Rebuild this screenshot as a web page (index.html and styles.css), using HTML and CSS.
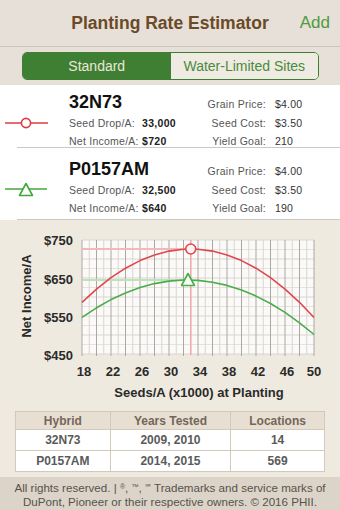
FILE: index.html
```html
<!DOCTYPE html>
<html>
<head>
<meta charset="utf-8">
<link rel="stylesheet" href="styles.css">
</head>
<body>
<header class="nav">
  <span></span>
  <h1 class="title">Planting Rate Estimator</h1>
  <span class="add">Add</span>
</header>
<div class="tabs">
  <div class="seg">
    <span class="seg-on">Standard</span>
    <span class="seg-off">Water-Limited Sites</span>
  </div>
</div>
<ul class="hybrids">
  <li class="row row-first">
    <div class="name">32N73</div>
    <div class="rlabel r1">Grain Price:</div><div class="rval r1">$4.00</div>
    <svg class="icon r2" width="48" height="14" viewBox="0 0 48 14"><line x1="5" y1="7" x2="48" y2="7" stroke="#dc3c43" stroke-width="1.6"/><circle cx="26" cy="7" r="4.6" fill="#fff" stroke="#dc3c43" stroke-width="1.6"/></svg>
    <div class="llabel r2">Seed Drop/A:</div><div class="lval r2">33,000</div>
    <div class="rlabel r2">Seed Cost:</div><div class="rval r2">$3.50</div>
    <div class="llabel r3">Net Income/A:</div><div class="lval r3">$720</div>
    <div class="rlabel r3">Yield Goal:</div><div class="rval r3">210</div>
  </li>
  <li class="row row-second">
    <div class="name">P0157AM</div>
    <div class="rlabel r1">Grain Price:</div><div class="rval r1">$4.00</div>
    <svg class="icon r2" width="48" height="16" viewBox="0 0 48 16"><line x1="5" y1="7" x2="47" y2="7" stroke="#43a63b" stroke-width="1.6"/><polygon points="26,1.5 19.5,13.5 32.5,13.5" fill="#fff" stroke="#43a63b" stroke-width="1.6" stroke-linejoin="round"/></svg>
    <div class="llabel r2">Seed Drop/A:</div><div class="lval r2">32,500</div>
    <div class="rlabel r2">Seed Cost:</div><div class="rval r2">$3.50</div>
    <div class="llabel r3">Net Income/A:</div><div class="lval r3">$640</div>
    <div class="rlabel r3">Yield Goal:</div><div class="rval r3">190</div>
  </li>
</ul>
<section class="results">
  <svg class="chart" width="340" height="182" viewBox="0 221 340 182">
    <rect x="82" y="241" width="232" height="114" fill="#fbfaf8"/>
    <g stroke="#e6e3de" stroke-width="1">
      <line x1="82" y1="250.5" x2="314" y2="250.5"/>
      <line x1="82" y1="269.5" x2="314" y2="269.5"/>
      <line x1="82" y1="288.5" x2="314" y2="288.5"/>
      <line x1="82" y1="307.5" x2="314" y2="307.5"/>
      <line x1="82" y1="326.5" x2="314" y2="326.5"/>
      <line x1="82" y1="345.5" x2="314" y2="345.5"/>
    </g>
    <g stroke="#d8d5d0" stroke-width="1">
      <line x1="82" y1="241" x2="314" y2="241"/>
      <line x1="82" y1="260" x2="314" y2="260"/>
      <line x1="82" y1="279" x2="314" y2="279"/>
      <line x1="82" y1="298" x2="314" y2="298"/>
      <line x1="82" y1="317" x2="314" y2="317"/>
      <line x1="82" y1="336" x2="314" y2="336"/>
      <line x1="82" y1="355" x2="314" y2="355"/>
    </g>
    <g stroke="#d9d6d1" stroke-width="1">
      <line x1="89.25" y1="241" x2="89.25" y2="356"/>
      <line x1="103.75" y1="241" x2="103.75" y2="356"/>
      <line x1="118.25" y1="241" x2="118.25" y2="356"/>
      <line x1="132.75" y1="241" x2="132.75" y2="356"/>
      <line x1="147.25" y1="241" x2="147.25" y2="356"/>
      <line x1="161.75" y1="241" x2="161.75" y2="356"/>
      <line x1="176.25" y1="241" x2="176.25" y2="356"/>
      <line x1="190.75" y1="241" x2="190.75" y2="356"/>
      <line x1="205.25" y1="241" x2="205.25" y2="356"/>
      <line x1="219.75" y1="241" x2="219.75" y2="356"/>
      <line x1="234.25" y1="241" x2="234.25" y2="356"/>
      <line x1="248.75" y1="241" x2="248.75" y2="356"/>
      <line x1="263.25" y1="241" x2="263.25" y2="356"/>
      <line x1="277.75" y1="241" x2="277.75" y2="356"/>
      <line x1="292.25" y1="241" x2="292.25" y2="356"/>
      <line x1="306.75" y1="241" x2="306.75" y2="356"/>
    </g>
    <g stroke="#aaa8a4" stroke-width="1">
      <line x1="82" y1="241" x2="82" y2="357"/>
      <line x1="96.5" y1="241" x2="96.5" y2="357"/>
      <line x1="111" y1="241" x2="111" y2="357"/>
      <line x1="125.5" y1="241" x2="125.5" y2="357"/>
      <line x1="140" y1="241" x2="140" y2="357"/>
      <line x1="154.5" y1="241" x2="154.5" y2="357"/>
      <line x1="169" y1="241" x2="169" y2="357"/>
      <line x1="183.5" y1="241" x2="183.5" y2="357"/>
      <line x1="198" y1="241" x2="198" y2="357"/>
      <line x1="212.5" y1="241" x2="212.5" y2="357"/>
      <line x1="227" y1="241" x2="227" y2="357"/>
      <line x1="241.5" y1="241" x2="241.5" y2="357"/>
      <line x1="256" y1="241" x2="256" y2="357"/>
      <line x1="270.5" y1="241" x2="270.5" y2="357"/>
      <line x1="285" y1="241" x2="285" y2="357"/>
      <line x1="299.5" y1="241" x2="299.5" y2="357"/>
      <line x1="314" y1="241" x2="314" y2="357"/>
    </g>
    <line x1="82" y1="250" x2="190.75" y2="250" stroke="#f3b9b9" stroke-width="2"/>
    <line x1="82" y1="281" x2="188" y2="281" stroke="#bfe2ba" stroke-width="2"/>
    <line x1="190.75" y1="241" x2="190.75" y2="356" stroke="#f0a9a9" stroke-width="1.5"/>
    <polyline fill="none" stroke="#e2464c" stroke-width="1.6" stroke-linejoin="round" points="82,303.3 96.5,290.1 111,278.7 125.5,269.2 140,261.6 154.5,255.9 169,252.1 183.5,250.2 190.75,250 198,250.2 212.5,252.1 227,255.9 241.5,261.6 256,269.2 270.5,278.7 285,290.1 299.5,303.3 314,318.5"/>
    <polyline fill="none" stroke="#4aad47" stroke-width="1.6" stroke-linejoin="round" points="82,318.4 96.5,308.8 111,300.6 125.5,293.9 140,288.5 154.5,284.6 169,282.1 183.5,281 187.1,281 198,281.4 212.5,283.2 227,286.4 241.5,291 256,297.1 270.5,304.5 285,313.4 299.5,323.8 314,335.5"/>
    <circle cx="190.75" cy="250" r="5" fill="#fdf3f2" stroke="#e2464c" stroke-width="1.6"/>
    <polygon points="188,274.5 181.5,286.5 194.5,286.5" fill="#f6fbf4" stroke="#4aad47" stroke-width="1.6" stroke-linejoin="round"/>
    <g class="ylab" text-anchor="end">
      <text x="73" y="246">$750</text>
      <text x="73" y="284.5">$650</text>
      <text x="73" y="322.5">$550</text>
      <text x="73" y="360.5">$450</text>
    </g>
    <g class="xlab" text-anchor="middle">
      <text x="84" y="377">18</text>
      <text x="113" y="377">22</text>
      <text x="142" y="377">26</text>
      <text x="171" y="377">30</text>
      <text x="200" y="377">34</text>
      <text x="229" y="377">38</text>
      <text x="258" y="377">42</text>
      <text x="287" y="377">46</text>
      <text x="314" y="377">50</text>
    </g>
    <text class="axtitle" x="199" y="398" text-anchor="middle">Seeds/A (x1000) at Planting</text>
    <text class="axtitle" x="0" y="0" text-anchor="middle" transform="translate(31 297) rotate(-90)">Net Income/A</text>
  </svg>
  <table class="trials">
    <thead>
      <tr><th class="c1">Hybrid</th><th class="c2">Years Tested</th><th class="c3">Locations</th></tr>
    </thead>
    <tbody>
      <tr><td>32N73</td><td>2009, 2010</td><td>14</td></tr>
      <tr><td>P0157AM</td><td>2014, 2015</td><td>569</td></tr>
    </tbody>
  </table>
</section>
<footer class="legal">
  <p>All rights reserved. | <span class="mark">®</span>, <span class="mark">™</span>, <span class="mark">℠</span> Trademarks and service marks of</p>
  <p>DuPont, Pioneer or their respective owners. © 2016 PHII.</p>
</footer>
</body>
</html>
```
FILE: styles.css
```css
* { box-sizing: border-box; }
html, body { margin: 0; padding: 0; }
body {
  width: 340px;
  height: 510px;
  overflow: hidden;
  font-family: "Liberation Sans", Arial, sans-serif;
  background: #efeadf;
  color: #222;
}
.nav {
  display: grid;
  grid-template-columns: 1fr auto 1fr;
  align-items: center;
  height: 47px;
  background: #e6e0d8;
  border-bottom: 1px solid #cdc5ba;
}
.title {
  margin: 0;
  font-size: 17.5px;
  font-weight: bold;
  color: #6b4a28;
}
.add {
  justify-self: end;
  padding-right: 10px;
  font-size: 17px;
  color: #4f9a3f;
}
.tabs {
  background: #e6e0d8;
  padding: 5px 21px 5px 22px;
}
.seg {
  display: grid;
  grid-template-columns: 1fr 1fr;
  height: 28px;
  border: 1px solid #3e7f33;
  border-radius: 5px;
  overflow: hidden;
  font-size: 14px;
}
.seg span {
  display: flex;
  align-items: center;
  justify-content: center;
}
.seg-on { background: #3e7f33; color: #ebe6da; }
.seg-off { background: #efeae2; color: #4b8a3c; }

.hybrids {
  list-style: none;
  margin: 0;
  padding: 0;
  background: #fff;
}
.row {
  position: relative;
  display: grid;
  grid-template-columns: 69px 73px 57px 67px 1fr;
  grid-template-rows: 23px 18px 18px;
  font-size: 10.5px;
  line-height: 18px;
}
.row::after {
  content: "";
  position: absolute;
  left: 17px;
  right: 0;
  bottom: 0;
  border-bottom: 1px solid #c9c9c9;
}
.row-first { height: 63px; padding-top: 6px; }
.row-second { height: 72px; padding-top: 10px; }
.name {
  grid-column: 2 / 4;
  grid-row: 1;
  font-size: 18px;
  font-weight: bold;
  line-height: 22px;
  color: #111;
}
.r1 { grid-row: 1; align-self: end; margin-bottom: 1px; }
.r2 { grid-row: 2; }
.r3 { grid-row: 3; }
.icon { grid-column: 1; align-self: center; }
.llabel { grid-column: 2; color: #555; letter-spacing: 0.25px; }
.lval { grid-column: 3; font-weight: bold; color: #222; letter-spacing: 0.3px; }
.rlabel { grid-column: 4; text-align: right; color: #555; letter-spacing: 0.25px; }
.rval { grid-column: 5; padding-left: 9px; color: #333; letter-spacing: 0.2px; }

.results {
  background: #efeadf;
  padding-bottom: 5px;
}
.chart { display: block; }
.ylab text, .xlab text {
  font-family: "Liberation Sans", Arial, sans-serif;
  font-size: 13px;
  font-weight: bold;
  fill: #2a2a2a;
}
.axtitle {
  font-family: "Liberation Sans", Arial, sans-serif;
  font-size: 13px;
  font-weight: bold;
  fill: #2a2a2a;
}
.trials {
  margin: 9px 15px 0;
  width: 310px;
  border-collapse: collapse;
  font-size: 12px;
  text-align: center;
}
.trials th, .trials td {
  border: 1px solid #d3c9bb;
  padding: 0;
}
.trials th {
  height: 18px;
  background: #e7dfd2;
  color: #75665a;
  font-weight: bold;
}
.trials td {
  height: 21px;
  background: #fff;
  color: #5a5a5a;
  font-weight: bold;
}
.c1 { width: 95px; }
.c2 { width: 121px; }
.c3 { width: 94px; }
.legal {
  background: #dcd4c8;
  height: 33px;
  padding-top: 3px;
  text-align: center;
  font-size: 11.6px;
  line-height: 14px;
  color: #58524c;
}
.legal p { margin: 0; white-space: nowrap; }
.mark { font-size: 7px; vertical-align: 3px; }
```
